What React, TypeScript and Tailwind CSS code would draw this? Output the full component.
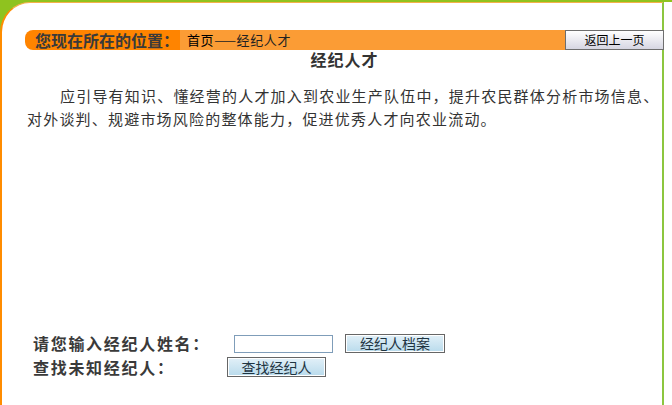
import React from "react";

const font = "font-['Noto_Sans_CJK_SC','Noto_Sans',sans-serif]";

export default function App() {
  return (
    <div className={`w-[672px] h-[405px] bg-white overflow-hidden ${font}`}>
      <div className="h-[2px] bg-[#8fc31f]" />
      <div className="w-[664px] h-[403px] bg-[#8fc31f]">
        <div className="h-full bg-white rounded-tl-[30px] border-l-2 border-t border-l-[#ff8c00] border-t-[#f5b04a] border-r-2 border-r-[#8cc63f] flex flex-col">
          {/* breadcrumb bar */}
          <div className="ml-[23px] mt-[27px] flex h-[20px] w-[639px] shrink-0">
            <div className="w-[155px] shrink-0 bg-[#ff8400] rounded-l-[8px] pl-[10px] flex items-center">
              <span className="text-[16px] leading-[20px] font-bold text-[#3a3a3a] whitespace-nowrap">您现在所在的位置：</span>
            </div>
            <div className="w-[385px] shrink-0 bg-[#fb9c35] pl-[7px] flex items-center">
              <span className="text-[13px] leading-[20px] tracking-[0.6px] whitespace-nowrap text-[#222]">
                <span className="text-black">首页</span>——经纪人才
              </span>
            </div>
            <button className="w-[99px] h-[20px] shrink-0 border border-[#6e6e6e] bg-gradient-to-b from-white to-[#d6d6e2] text-[12px] leading-[18px] text-black">
              返回上一页
            </button>
          </div>

          {/* title */}
          <div className="ml-[23px] w-[639px] h-[18px] text-center text-[16px] leading-[18px] font-bold tracking-[1px] text-[#333]">
            经纪人才
          </div>

          {/* paragraph */}
          <p className="ml-[25px] mt-[16px] w-[625px] text-[15px] leading-[23px] tracking-[1.2px] text-[#333] indent-[33px] whitespace-nowrap">
            应引导有知识、懂经营的人才加入到农业生产队伍中，提升农民群体分析市场信息、
            <br />
            对外谈判、规避市场风险的整体能力，促进优秀人才向农业流动。
          </p>

          {/* form */}
          <div className="mt-[204px] ml-[31px] flex flex-col">
            <div className="flex items-center h-[19px]">
              <span className="w-[201px] shrink-0 text-[16px] leading-[19px] font-bold tracking-[1.7px] text-[#3a3a3a] whitespace-nowrap">
                请您输入经纪人姓名：
              </span>
              <input
                type="text"
                className="w-[99px] h-[18px] border border-[#7f9db9] bg-white outline-none shrink-0"
              />
              <button className="ml-[12px] w-[100px] h-[19px] shrink-0 border border-[#666] shadow-[inset_0_0_0_1px_#fff] bg-gradient-to-b from-[#e2f0f8] to-[#b9dbec] text-[14px] leading-[17px] text-[#1e3442]">
                经纪人档案
              </button>
            </div>
            <div className="flex items-center h-[20px] mt-[4px]">
              <span className="w-[194px] shrink-0 text-[16px] leading-[20px] font-bold tracking-[1.7px] text-[#3a3a3a] whitespace-nowrap">
                查找未知经纪人：
              </span>
              <button className="w-[99px] h-[20px] shrink-0 border border-[#666] shadow-[inset_0_0_0_1px_#fff] bg-gradient-to-b from-[#e2f0f8] to-[#b9dbec] text-[14px] leading-[18px] text-[#1e3442]">
                查找经纪人
              </button>
            </div>
          </div>
        </div>
      </div>
    </div>
  );
}
